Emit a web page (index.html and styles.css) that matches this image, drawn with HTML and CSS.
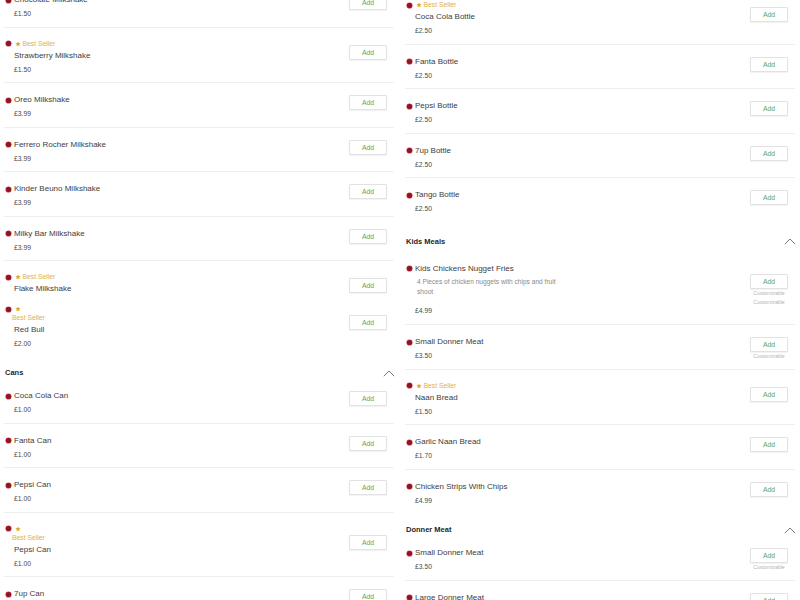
FILE: index.html
```html
<!DOCTYPE html>
<html lang="en">
<head>
<meta charset="utf-8">
<title>Menu</title>
<link rel="stylesheet" href="styles.css">
</head>
<body>
<svg width="0" height="0" class="defs" aria-hidden="true">
  <defs>
    <symbol id="star" viewBox="0 0 24 24"><path d="M12 1.8l3.1 6.5 7.1.9-5.2 4.9 1.3 7-6.3-3.4-6.3 3.4 1.3-7L1.8 9.2l7.1-.9z"/></symbol>
    <symbol id="chev" viewBox="0 0 12 7"><polyline points="0.8,6.2 6,1 11.2,6.2" fill="none" stroke="currentColor" stroke-width="0.9"/></symbol>
  </defs>
</svg>
<div class="page">
  <div class="col col-left">
    <div class="item">
      <div class="info">
        <div class="line"><span class="dot"></span><span class="name">Chocolate Milkshake</span></div>
        <div class="price">£1.50</div>
      </div>
      <div class="action"><button class="add">Add</button><div class="custom hide">Customizable</div></div>
    </div>
    <div class="item">
      <div class="info">
        <div class="tag"><span class="dot"></span><svg class="star"><use href="#star"/></svg><span class="best">Best Seller</span></div>
        <div class="name after-tag">Strawberry Milkshake</div>
        <div class="price">£1.50</div>
      </div>
      <div class="action"><button class="add">Add</button><div class="custom hide">Customizable</div></div>
    </div>
    <div class="item">
      <div class="info">
        <div class="line"><span class="dot"></span><span class="name">Oreo Milkshake</span></div>
        <div class="price">£3.99</div>
      </div>
      <div class="action"><button class="add">Add</button><div class="custom hide">Customizable</div></div>
    </div>
    <div class="item">
      <div class="info">
        <div class="line"><span class="dot"></span><span class="name">Ferrero Rocher Milkshake</span></div>
        <div class="price">£3.99</div>
      </div>
      <div class="action"><button class="add">Add</button><div class="custom hide">Customizable</div></div>
    </div>
    <div class="item">
      <div class="info">
        <div class="line"><span class="dot"></span><span class="name">Kinder Beuno Milkshake</span></div>
        <div class="price">£3.99</div>
      </div>
      <div class="action"><button class="add">Add</button><div class="custom hide">Customizable</div></div>
    </div>
    <div class="item">
      <div class="info">
        <div class="line"><span class="dot"></span><span class="name">Milky Bar Milkshake</span></div>
        <div class="price">£3.99</div>
      </div>
      <div class="action"><button class="add">Add</button><div class="custom hide">Customizable</div></div>
    </div>
    <div class="item item-flake">
      <div class="info">
        <div class="tag"><span class="dot"></span><svg class="star"><use href="#star"/></svg><span class="best">Best Seller</span></div>
        <div class="name after-tag">Flake Milkshake</div>
      </div>
      <div class="action action-top"><button class="add">Add</button></div>
    </div>
    <div class="item item-wrap item-redbull last">
      <div class="info">
        <div class="tag"><span class="dot"></span><svg class="star"><use href="#star"/></svg></div>
        <div class="best best-wrapped">Best Seller</div>
        <div class="name after-wrap">Red Bull</div>
        <div class="price">£2.00</div>
      </div>
      <div class="action"><button class="add">Add</button><div class="custom hide">Customizable</div></div>
    </div>

    <div class="section-head">
      <span>Cans</span><svg class="chev"><use href="#chev"/></svg>
    </div>
    <div class="item">
      <div class="info">
        <div class="line"><span class="dot"></span><span class="name">Coca Cola Can</span></div>
        <div class="price">£1.00</div>
      </div>
      <div class="action"><button class="add">Add</button><div class="custom hide">Customizable</div></div>
    </div>
    <div class="item">
      <div class="info">
        <div class="line"><span class="dot"></span><span class="name">Fanta Can</span></div>
        <div class="price">£1.00</div>
      </div>
      <div class="action"><button class="add">Add</button><div class="custom hide">Customizable</div></div>
    </div>
    <div class="item">
      <div class="info">
        <div class="line"><span class="dot"></span><span class="name">Pepsi Can</span></div>
        <div class="price">£1.00</div>
      </div>
      <div class="action"><button class="add">Add</button><div class="custom hide">Customizable</div></div>
    </div>
    <div class="item item-wrap">
      <div class="info">
        <div class="tag"><span class="dot"></span><svg class="star"><use href="#star"/></svg></div>
        <div class="best best-wrapped">Best Seller</div>
        <div class="name after-wrap">Pepsi Can</div>
        <div class="price">£1.00</div>
      </div>
      <div class="action"><button class="add">Add</button><div class="custom hide">Customizable</div></div>
    </div>
    <div class="item">
      <div class="info">
        <div class="line"><span class="dot"></span><span class="name">7up Can</span></div>
        <div class="price">£1.00</div>
      </div>
      <div class="action"><button class="add">Add</button><div class="custom hide">Customizable</div></div>
    </div>
  </div>

  <div class="col col-right">
    <div class="item">
      <div class="info">
        <div class="tag"><span class="dot"></span><svg class="star"><use href="#star"/></svg><span class="best">Best Seller</span></div>
        <div class="name after-tag">Coca Cola Bottle</div>
        <div class="price">£2.50</div>
      </div>
      <div class="action"><button class="add">Add</button><div class="custom hide">Customizable</div></div>
    </div>
    <div class="item">
      <div class="info">
        <div class="line"><span class="dot"></span><span class="name">Fanta Bottle</span></div>
        <div class="price">£2.50</div>
      </div>
      <div class="action"><button class="add">Add</button><div class="custom hide">Customizable</div></div>
    </div>
    <div class="item">
      <div class="info">
        <div class="line"><span class="dot"></span><span class="name">Pepsi Bottle</span></div>
        <div class="price">£2.50</div>
      </div>
      <div class="action"><button class="add">Add</button><div class="custom hide">Customizable</div></div>
    </div>
    <div class="item">
      <div class="info">
        <div class="line"><span class="dot"></span><span class="name">7up Bottle</span></div>
        <div class="price">£2.50</div>
      </div>
      <div class="action"><button class="add">Add</button><div class="custom hide">Customizable</div></div>
    </div>
    <div class="item last">
      <div class="info">
        <div class="line"><span class="dot"></span><span class="name">Tango Bottle</span></div>
        <div class="price">£2.50</div>
      </div>
      <div class="action"><button class="add">Add</button><div class="custom hide">Customizable</div></div>
    </div>

    <div class="section-head">
      <span>Kids Meals</span><svg class="chev"><use href="#chev"/></svg>
    </div>
    <div class="item item-kids">
      <div class="info">
        <div class="line"><span class="dot"></span><span class="name">Kids Chickens Nugget Fries</span></div>
        <p class="desc">4 Pieces of chicken nuggets with chips and fruit shoot</p>
        <div class="price price-gap">£4.99</div>
      </div>
      <div class="action action-kids"><button class="add">Add</button><div class="custom">Customizable</div><div class="custom">Customizable</div></div>
    </div>
    <div class="item">
      <div class="info">
        <div class="line"><span class="dot"></span><span class="name">Small Donner Meat</span></div>
        <div class="price">£3.50</div>
      </div>
      <div class="action"><button class="add">Add</button><div class="custom">Customizable</div></div>
    </div>
    <div class="item">
      <div class="info">
        <div class="tag"><span class="dot"></span><svg class="star"><use href="#star"/></svg><span class="best">Best Seller</span></div>
        <div class="name after-tag">Naan Bread</div>
        <div class="price">£1.50</div>
      </div>
      <div class="action"><button class="add">Add</button><div class="custom hide">Customizable</div></div>
    </div>
    <div class="item">
      <div class="info">
        <div class="line"><span class="dot"></span><span class="name">Garlic Naan Bread</span></div>
        <div class="price">£1.70</div>
      </div>
      <div class="action"><button class="add">Add</button><div class="custom hide">Customizable</div></div>
    </div>
    <div class="item last">
      <div class="info">
        <div class="line"><span class="dot"></span><span class="name">Chicken Strips With Chips</span></div>
        <div class="price">£4.99</div>
      </div>
      <div class="action"><button class="add">Add</button><div class="custom hide">Customizable</div></div>
    </div>

    <div class="section-head section-head-tight">
      <span>Donner Meat</span><svg class="chev"><use href="#chev"/></svg>
    </div>
    <div class="item">
      <div class="info">
        <div class="line"><span class="dot"></span><span class="name">Small Donner Meat</span></div>
        <div class="price">£3.50</div>
      </div>
      <div class="action"><button class="add">Add</button><div class="custom">Customizable</div></div>
    </div>
    <div class="item">
      <div class="info">
        <div class="line"><span class="dot"></span><span class="name">Large Donner Meat</span></div>
        <div class="price">£6.50</div>
      </div>
      <div class="action"><button class="add">Add</button><div class="custom">Customizable</div></div>
    </div>
  </div>
</div>
</body>
</html>
```

FILE: styles.css
```css
* { box-sizing: border-box; }

html, body {
  margin: 0;
  padding: 0;
  background: #ffffff;
  overflow: hidden;
}

body {
  font-family: "Liberation Sans", Arial, sans-serif;
  color: #3a3a3a;
  height: 600px;
}

.defs { position: absolute; width: 0; height: 0; }

.page {
  display: grid;
  grid-template-columns: 390px 390px;
  column-gap: 11px;
  padding-left: 4px;
  align-items: start;
}

.col-left { margin-top: -17px; }
.col-right { margin-top: -11px; }

.item {
  display: flex;
  justify-content: space-between;
  padding: 11px 7px 6.5px 2px;
  border-bottom: 1px solid #efefef;
}

.item.last { border-bottom-color: transparent; }

.info {
  display: flex;
  flex-direction: column;
  min-width: 0;
}

.line {
  display: flex;
  align-items: center;
  height: 12px;
}

.dot {
  width: 5px;
  height: 5px;
  border-radius: 50%;
  background: #8e1526;
  box-shadow: 0 0 0 0.6px #d0414f;
  margin-right: 3px;
  flex: none;
}

.name {
  font-size: 8px;
  line-height: 12px;
  color: #3d3d3d;
  white-space: nowrap;
}

.tag {
  display: flex;
  align-items: center;
  height: 10px;
}

.tag .dot { margin-right: 4px; }

.star {
  width: 6px;
  height: 6px;
  fill: #e3a72b;
  margin-right: 1.5px;
  flex: none;
}

.best {
  font-size: 6.8px;
  line-height: 10px;
  color: #e0b24a;
}

.best-wrapped {
  line-height: 8px;
  margin-left: 6px;
}

.after-tag { margin-top: 1px; padding-left: 8px; }
.after-wrap { margin-top: 2px; padding-left: 8px; }

.price {
  font-size: 6.8px;
  line-height: 12px;
  margin-top: 2px;
  padding-left: 8px;
  color: #4a4a4a;
}

.price-gap { margin-top: 8px; }

.desc {
  width: 156px;
  margin: 2px 0 0 0;
  padding-left: 10px;
  font-size: 6.6px;
  line-height: 10px;
  color: #8a8a8a;
  white-space: normal;
}

.action {
  display: flex;
  flex-direction: column;
  align-items: center;
  align-self: center;
  width: 38px;
  flex: none;
}

.action-top { align-self: flex-start; margin-top: 6px; }
.action-kids { align-self: flex-start; margin-top: 11.5px; }

.add {
  width: 38px;
  height: 15px;
  padding: 0;
  margin: 0;
  background: #ffffff;
  border: 1px solid #e2e2e2;
  border-radius: 1px;
  box-shadow: 0 1px 1.5px rgba(0, 0, 0, 0.06);
  font-family: "Liberation Sans", Arial, sans-serif;
  font-size: 6.8px;
  color: #5aa55a;
  line-height: 13px;
}

.custom {
  font-size: 5.2px;
  line-height: 8.5px;
  color: #b4b4b4;
  white-space: nowrap;
}

.custom.hide { visibility: hidden; }

.item-flake { padding-bottom: 0; border-bottom: 0; }
.item-redbull { padding-top: 9px; padding-bottom: 3px; }

.item-kids { padding-top: 15px; padding-bottom: 7.5px; }

.section-head {
  display: flex;
  justify-content: space-between;
  align-items: center;
  padding: 13px 0 0 1px;
  height: 25px;
  font-size: 7.5px;
  font-weight: bold;
  line-height: 12px;
  color: #1f1f1f;
}

.section-head-tight { padding-top: 10px; height: 22px; }

.chev {
  width: 12px;
  height: 7px;
  color: #6a6a6a;
  margin-right: -1px;
}
```
